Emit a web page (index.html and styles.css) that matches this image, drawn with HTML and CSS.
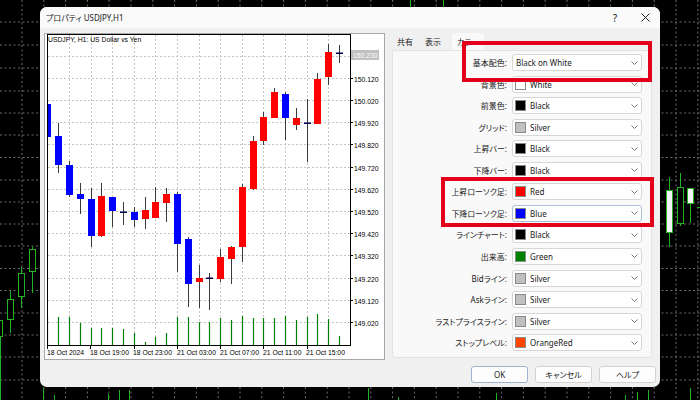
FILE: index.html
```html
<!DOCTYPE html>
<html lang="ja">
<head>
<meta charset="utf-8">
<title>プロパティ USDJPY,H1</title>
<link rel="stylesheet" href="styles.css">
</head>
<body>
<svg class="backdrop" width="700" height="400" viewBox="0 0 700 400">
  <g class="bg-grid">
    <path d="M22 0V400M43.8 0V400M65.6 0V400M87.4 0V400M109 0V400M131 0V400M152.8 0V400M174.6 0V400M196.4 0V400M218.2 0V400M240 0V400M261.8 0V400M283.6 0V400M305.4 0V400M327.2 0V400M349 0V400M370.8 0V400M392.6 0V400M414.4 0V400M436.2 0V400M458 0V400M479.8 0V400M501.6 0V400M523.4 0V400M545.2 0V400M567 0V400M588.8 0V400M610.6 0V400M632.4 0V400M654.2 0V400M676 0V400M697.8 0V400"/>
    <path d="M0 22H700M0 45H700M0 68H700M0 91H700M0 113H700M0 135H700M0 157.5H700M0 180H700M0 202H700M0 224H700M0 246H700M0 268.5H700M0 290.5H700M0 313H700M0 335H700M0 357H700M0 380H700"/>
  </g>
  <g class="bg-candles">
    <line x1="0.5" y1="337" x2="0.5" y2="400"/>
    <rect x="-3.5" y="320.5" width="6" height="16"/>
    <line x1="10.5" y1="291" x2="10.5" y2="333"/>
    <rect x="7.5" y="299.5" width="6" height="20" class="hollow"/>
    <line x1="21.5" y1="267" x2="21.5" y2="308"/>
    <rect x="18.5" y="273.5" width="6" height="23" class="hollow"/>
    <line x1="32.5" y1="247" x2="32.5" y2="293"/>
    <rect x="29.5" y="249.5" width="6" height="22" class="hollow"/>
    <line x1="669.5" y1="177" x2="669.5" y2="247"/>
    <rect x="666.5" y="190.5" width="6" height="42" class="white"/>
    <line x1="680.5" y1="173" x2="680.5" y2="226"/>
    <rect x="677.5" y="187.5" width="6" height="36" class="hollow"/>
    <line x1="690.5" y1="188" x2="690.5" y2="223"/>
    <rect x="687.5" y="188.5" width="6" height="15" class="white"/>
    <line x1="697" y1="207.5" x2="700" y2="207.5"/>
    <path class="vol" d="M410.5 0V7M443.5 0V7M43.5 388V400M54.5 395V400M108.5 394V400M119.5 390V400M129.5 390V400M368.5 388V400M398.5 397V400M496.5 393V400M625.5 395V400M637.5 392V400M648.5 390V400M690.5 388V400"/>
  </g>
</svg>

<div class="dialog">
  <div class="titlebar">
    <span class="title">プロパティ USDJPY,H1</span>
    <span class="tb-btn">?</span>
    <span class="tb-btn">
      <svg width="9" height="9" viewBox="0 0 9 9"><path d="M0.5 0.5L8.5 8.5M8.5 0.5L0.5 8.5" stroke="#222" stroke-width="1" fill="none"/></svg>
    </span>
  </div>
  <div class="content">
    <div class="main">
      <div class="chart-panel">
        <svg class="chart" width="339" height="325" viewBox="45 34 339 325">
          <defs>
            <clipPath id="plot"><rect x="48" y="35" width="302" height="310"/></clipPath>
          </defs>
          <g class="grid">
            <path d="M69.5 35V345M91.5 35V345M112.5 35V345M134.5 35V345M155.5 35V345M177.5 35V345M199.5 35V345M220.5 35V345M242.5 35V345M263.5 35V345M285.5 35V345M307.5 35V345M328.5 35V345"/>
            <path d="M48 56.5H350M48 78.5H350M48 100.5H350M48 122.5H350M48 144.5H350M48 167.5H350M48 189.5H350M48 211.5H350M48 233.5H350M48 255.5H350M48 278.5H350M48 300.5H350M48 322.5H350"/>
          </g>
          <g class="vols" clip-path="url(#plot)">
            <path d="M47.5 345V317M58.5 345V317M69.5 345V317M80.5 345V323M91.5 345V328M101.5 345V328M112.5 345V328M123.5 345V329M134.5 345V333M145.5 345V342M155.5 345V337M166.5 345V333M177.5 345V317M188.5 345V317M199.5 345V322M209.5 345V322M220.5 345V318M231.5 345V320M242.5 345V316M253.5 345V318M263.5 345V318M274.5 345V318M285.5 345V316M296.5 345V320M307.5 345V317M317.5 345V314M328.5 345V319M339.5 345V336"/>
          </g>
          <g class="candles" clip-path="url(#plot)">
            <line x1="47.5" y1="100" x2="47.5" y2="141"/><rect class="dn" x="44" y="104" width="7" height="33"/>
            <line x1="58.5" y1="123" x2="58.5" y2="173"/><rect class="dn" x="55" y="136" width="7" height="29"/>
            <line x1="69.5" y1="161" x2="69.5" y2="197"/><rect class="dn" x="66" y="165" width="7" height="30"/>
            <line x1="80.5" y1="183" x2="80.5" y2="214"/><rect class="dn" x="77" y="194" width="7" height="5"/>
            <line x1="91.5" y1="188" x2="91.5" y2="247"/><rect class="dn" x="88" y="199" width="7" height="37"/>
            <line x1="101.5" y1="183" x2="101.5" y2="237"/><rect class="up" x="98" y="196" width="7" height="40"/>
            <line x1="112.5" y1="197" x2="112.5" y2="227"/><rect class="dn" x="109" y="197" width="7" height="14"/>
            <line x1="123.5" y1="202" x2="123.5" y2="225"/><rect class="doji" x="120" y="211.5" width="7" height="1.5"/>
            <line x1="134.5" y1="207" x2="134.5" y2="227"/><rect class="dn" x="131" y="212" width="7" height="8"/>
            <line x1="145.5" y1="197" x2="145.5" y2="229"/><rect class="up" x="142" y="210" width="7" height="9"/>
            <line x1="155.5" y1="187" x2="155.5" y2="218"/><rect class="up" x="152" y="202" width="7" height="16"/>
            <line x1="166.5" y1="188" x2="166.5" y2="222"/><rect class="up" x="163" y="194" width="7" height="9"/>
            <line x1="177.5" y1="192" x2="177.5" y2="272"/><rect class="dn" x="174" y="194" width="7" height="50"/>
            <line x1="188.5" y1="237" x2="188.5" y2="307"/><rect class="dn" x="185" y="239" width="7" height="45"/>
            <line x1="199.5" y1="265" x2="199.5" y2="308"/><rect class="up" x="196" y="278" width="7" height="4"/>
            <line x1="209.5" y1="273" x2="209.5" y2="310"/><rect class="doji" x="206" y="277.5" width="7" height="1.5"/>
            <line x1="220.5" y1="249" x2="220.5" y2="282"/><rect class="up" x="217" y="257" width="7" height="22"/>
            <line x1="231.5" y1="246" x2="231.5" y2="284"/><rect class="up" x="228" y="247" width="7" height="12"/>
            <line x1="242.5" y1="184" x2="242.5" y2="262"/><rect class="up" x="239" y="187" width="7" height="60"/>
            <line x1="253.5" y1="136" x2="253.5" y2="190"/><rect class="up" x="250" y="141" width="7" height="48"/>
            <line x1="263.5" y1="112" x2="263.5" y2="145"/><rect class="up" x="260" y="117" width="7" height="24"/>
            <line x1="274.5" y1="88" x2="274.5" y2="118"/><rect class="up" x="271" y="92" width="7" height="26"/>
            <line x1="285.5" y1="92" x2="285.5" y2="140"/><rect class="dn" x="282" y="94" width="7" height="24"/>
            <line x1="296.5" y1="108" x2="296.5" y2="130"/><rect class="up" x="293" y="118" width="7" height="7"/>
            <line x1="307.5" y1="99" x2="307.5" y2="162"/><rect class="doji" x="304" y="122.5" width="7" height="1.5"/>
            <line x1="317.5" y1="73" x2="317.5" y2="124"/><rect class="up" x="314" y="79" width="7" height="45"/>
            <line x1="328.5" y1="44" x2="328.5" y2="85"/><rect class="up" x="325" y="52" width="7" height="25"/>
            <line x1="339.5" y1="45" x2="339.5" y2="63"/><rect class="doji" x="336" y="52.5" width="7" height="1.5"/>
          </g>
          <rect class="frame" x="47.5" y="34.5" width="303" height="311"/>
          <text class="sym" x="48" y="41.5">USDJPY, H1:  US Dollar vs Yen</text>
          <g class="ticks">
            <path d="M350 78.5H353M350 100.5H353M350 122.5H353M350 144.5H353M350 167.5H353M350 189.5H353M350 211.5H353M350 233.5H353M350 255.5H353M350 278.5H353M350 300.5H353M350 322.5H353"/>
            <path d="M47.5 346V349M90.5 346V349M134.5 346V349M177.5 346V349M220.5 346V349M263.5 346V349M307.5 346V349"/>
          </g>
          <g class="axis">
            <text x="354" y="81.5">150.120</text>
            <text x="354" y="103.5">150.020</text>
            <text x="354" y="125.5">149.920</text>
            <text x="354" y="147.5">149.820</text>
            <text x="354" y="170.5">149.720</text>
            <text x="354" y="192.5">149.620</text>
            <text x="354" y="214.5">149.520</text>
            <text x="354" y="236.5">149.420</text>
            <text x="354" y="258.5">149.320</text>
            <text x="354" y="281.5">149.220</text>
            <text x="354" y="303.5">149.120</text>
            <text x="354" y="325.5">149.020</text>
            <text x="47" y="355">18 Oct 2024</text>
            <text x="90" y="355">18 Oct 19:00</text>
            <text x="133" y="355">18 Oct 23:00</text>
            <text x="177" y="355">21 Oct 03:00</text>
            <text x="220" y="355">21 Oct 07:00</text>
            <text x="263" y="355">21 Oct 11:00</text>
            <text x="306" y="355">21 Oct 15:00</text>
          </g>
          <rect class="bid" x="351" y="50" width="28" height="10"/>
          <text class="bidtxt" x="353" y="57.5">150.230</text>
        </svg>
      </div>

      <div class="props">
        <div class="tabs">
          <span class="tab">共有</span>
          <span class="tab t2">表示</span>
          <span class="tab t3 active">カラー</span>
        </div>
        <div class="tab-page">
          <div class="form">
            <span class="lbl">基本配色:</span>
            <span class="combo"><span class="txt plain">Black on White</span><svg class="chev" width="7" height="4" viewBox="0 0 7 4"><path d="M0.5 0.5L3.5 3.5L6.5 0.5"/></svg></span>

            <span class="lbl">背景色:</span>
            <span class="combo"><span class="sw c-white"></span><span class="txt">White</span><svg class="chev" width="7" height="4" viewBox="0 0 7 4"><path d="M0.5 0.5L3.5 3.5L6.5 0.5"/></svg></span>

            <span class="lbl">前景色:</span>
            <span class="combo"><span class="sw c-black"></span><span class="txt">Black</span><svg class="chev" width="7" height="4" viewBox="0 0 7 4"><path d="M0.5 0.5L3.5 3.5L6.5 0.5"/></svg></span>

            <span class="lbl">グリッド:</span>
            <span class="combo"><span class="sw c-silver"></span><span class="txt">Silver</span><svg class="chev" width="7" height="4" viewBox="0 0 7 4"><path d="M0.5 0.5L3.5 3.5L6.5 0.5"/></svg></span>

            <span class="lbl">上昇バー:</span>
            <span class="combo"><span class="sw c-black"></span><span class="txt">Black</span><svg class="chev" width="7" height="4" viewBox="0 0 7 4"><path d="M0.5 0.5L3.5 3.5L6.5 0.5"/></svg></span>

            <span class="lbl">下降バー:</span>
            <span class="combo"><span class="sw c-black"></span><span class="txt">Black</span><svg class="chev" width="7" height="4" viewBox="0 0 7 4"><path d="M0.5 0.5L3.5 3.5L6.5 0.5"/></svg></span>

            <span class="lbl">上昇ローソク足:</span>
            <span class="combo"><span class="sw c-red"></span><span class="txt">Red</span><svg class="chev" width="7" height="4" viewBox="0 0 7 4"><path d="M0.5 0.5L3.5 3.5L6.5 0.5"/></svg></span>

            <span class="lbl">下降ローソク足:</span>
            <span class="combo focus"><span class="sw c-blue"></span><span class="txt">Blue</span><svg class="chev" width="7" height="4" viewBox="0 0 7 4"><path d="M0.5 0.5L3.5 3.5L6.5 0.5"/></svg></span>

            <span class="lbl">ラインチャート:</span>
            <span class="combo"><span class="sw c-black"></span><span class="txt">Black</span><svg class="chev" width="7" height="4" viewBox="0 0 7 4"><path d="M0.5 0.5L3.5 3.5L6.5 0.5"/></svg></span>

            <span class="lbl">出来高:</span>
            <span class="combo"><span class="sw c-green"></span><span class="txt">Green</span><svg class="chev" width="7" height="4" viewBox="0 0 7 4"><path d="M0.5 0.5L3.5 3.5L6.5 0.5"/></svg></span>

            <span class="lbl">Bidライン:</span>
            <span class="combo"><span class="sw c-silver"></span><span class="txt">Silver</span><svg class="chev" width="7" height="4" viewBox="0 0 7 4"><path d="M0.5 0.5L3.5 3.5L6.5 0.5"/></svg></span>

            <span class="lbl">Askライン:</span>
            <span class="combo"><span class="sw c-silver"></span><span class="txt">Silver</span><svg class="chev" width="7" height="4" viewBox="0 0 7 4"><path d="M0.5 0.5L3.5 3.5L6.5 0.5"/></svg></span>

            <span class="lbl">ラストプライスライン:</span>
            <span class="combo"><span class="sw c-silver"></span><span class="txt">Silver</span><svg class="chev" width="7" height="4" viewBox="0 0 7 4"><path d="M0.5 0.5L3.5 3.5L6.5 0.5"/></svg></span>

            <span class="lbl">ストップレベル:</span>
            <span class="combo"><span class="sw c-orangered"></span><span class="txt">OrangeRed</span><svg class="chev" width="7" height="4" viewBox="0 0 7 4"><path d="M0.5 0.5L3.5 3.5L6.5 0.5"/></svg></span>
          </div>
        </div>
      </div>
    </div>

    <div class="buttons">
      <button class="btn default">OK</button>
      <button class="btn">キャンセル</button>
      <button class="btn">ヘルプ</button>
    </div>
  </div>

  <div class="mark mark1"></div>
  <div class="mark mark2"></div>
</div>
</body>
</html>
```

FILE: styles.css
```css
html, body {
  margin: 0;
  padding: 0;
}

body {
  width: 700px;
  height: 400px;
  background: #000;
  overflow: hidden;
  position: relative;
  font-family: "Noto Sans", "Noto Sans CJK JP", sans-serif;
  color: #1a1a1a;
}

/* ---------- backdrop chart (dark MT4 window) ---------- */
.backdrop {
  position: absolute;
  left: 0;
  top: 0;
  display: block;
}

.bg-grid path {
  stroke: #6c6c6c;
  stroke-width: 1;
  stroke-dasharray: 2 2.5;
  fill: none;
}

.bg-candles line,
.bg-candles path {
  stroke: #22b322;
  stroke-width: 1;
  fill: none;
}

.bg-candles rect {
  stroke: #22b322;
  stroke-width: 1;
  fill: #000;
}

.bg-candles rect.white {
  fill: #f4f4f4;
}

/* ---------- dialog window ---------- */
.dialog {
  position: absolute;
  left: 40px;
  top: 7px;
  width: 620px;
  height: 380px;
  background: #f0f0f0;
  border-radius: 7px;
  overflow: hidden;
  display: flex;
  flex-direction: column;
}

.titlebar {
  height: 21px;
  flex: none;
  background: #fafafa;
  display: flex;
  align-items: center;
  padding-left: 6px;
  font-size: 8px;
  font-feature-settings: "palt" 1;
}

.title {
  flex: 1;
}

.tb-btn {
  width: 30px;
  text-align: center;
  font-size: 10px;
  display: flex;
  justify-content: center;
  align-items: center;
}

.content {
  flex: 1;
  display: flex;
  flex-direction: column;
  padding: 5px 4px 0 4px;
}

.main {
  display: flex;
  height: 327px;
}

.chart-panel {
  width: 339px;
  height: 325px;
  border: 1px solid #a8a8a8;
  background: #fff;
  flex: none;
}

.chart {
  display: block;
}

.grid path {
  stroke: #c4c4c4;
  stroke-width: 1;
  stroke-dasharray: 2 2;
  fill: none;
}

.vols path {
  stroke: #008000;
  stroke-width: 1.2;
  fill: none;
}

.candles line {
  stroke: #3a3a3a;
  stroke-width: 1;
}

.candles .up {
  fill: #ff0000;
}

.candles .dn {
  fill: #0000ff;
}

.candles .doji {
  fill: #000050;
}

.frame {
  fill: none;
  stroke: #000;
  stroke-width: 1;
}

.ticks path {
  stroke: #000;
  stroke-width: 1;
  fill: none;
}

.chart text {
  font-family: "Liberation Sans", sans-serif;
  font-size: 6.8px;
  fill: #000;
}

.chart .bid {
  fill: #c0c0c0;
}

.chart .bidtxt {
  fill: #fff;
}

/* ---------- property tabs ---------- */
.props {
  margin-left: 7px;
  width: 260px;
  display: flex;
  flex-direction: column;
}

.tabs {
  height: 17px;
  display: flex;
  font-size: 8px;
  font-feature-settings: "palt" 1;
}

.tab {
  padding: 0 5px;
  display: flex;
  align-items: center;
}

.tab.t2 {
  margin-left: 2px;
}

.tab.t3 {
  margin-left: 6px;
}

.tab.active {
  background: #f9f9f9;
  border-radius: 3px 3px 0 0;
}

.tab-page {
  height: 308px;
  box-sizing: border-box;
  background: #f9f9f9;
  border: 1px solid #e3e3e3;
  border-radius: 0 0 3px 3px;
}

.form {
  display: grid;
  grid-template-columns: 1fr 130px;
  grid-auto-rows: 17px;
  column-gap: 5px;
  row-gap: 4.54px;
  padding: 3.2px 9px 0 0;
}

.lbl {
  font-size: 8px;
  line-height: 17px;
  text-align: right;
  white-space: nowrap;
  font-feature-settings: "palt" 1;
}

.combo {
  display: flex;
  align-items: center;
  box-sizing: border-box;
  background: #fff;
  border: 1px solid #d6d6d6;
  border-radius: 3px;
  padding-left: 2px;
  font-size: 8px;
}

.combo.focus {
  border-color: #a7bfdc;
}

.sw {
  width: 11px;
  height: 11px;
  box-sizing: border-box;
  border: 1px solid #8a8a8a;
  margin-right: 4px;
  flex: none;
}

.txt.plain {
  padding-left: 1px;
}

.chev {
  margin-left: auto;
  margin-right: 3px;
}

.chev path {
  stroke: #777;
  stroke-width: 1;
  fill: none;
}

.c-white { background: #ffffff; }
.c-black { background: #000000; }
.c-silver { background: #c0c0c0; }
.c-red { background: #ff0000; }
.c-blue { background: #0000ff; }
.c-green { background: #008000; }
.c-orangered { background: #ff4500; }

/* ---------- buttons ---------- */
.buttons {
  display: flex;
  justify-content: flex-end;
  gap: 7px;
  margin-top: 6px;
}

.btn {
  width: 57px;
  height: 17px;
  padding: 0;
  box-sizing: border-box;
  background: #fdfdfd;
  border: 1px solid #d2d2d2;
  border-radius: 3px;
  font-family: "Noto Sans", "Noto Sans CJK JP", sans-serif;
  font-size: 8px;
  color: #1a1a1a;
  font-feature-settings: "palt" 1;
}

.btn.default {
  border-color: #9db3cf;
}

/* ---------- red annotation frames ---------- */
.mark {
  position: absolute;
  box-sizing: border-box;
  border: 4px solid #e3001b;
}

.mark1 {
  left: 422px;
  top: 34px;
  width: 190px;
  height: 41px;
}

.mark2 {
  left: 401px;
  top: 170px;
  width: 213px;
  height: 50px;
}
```
